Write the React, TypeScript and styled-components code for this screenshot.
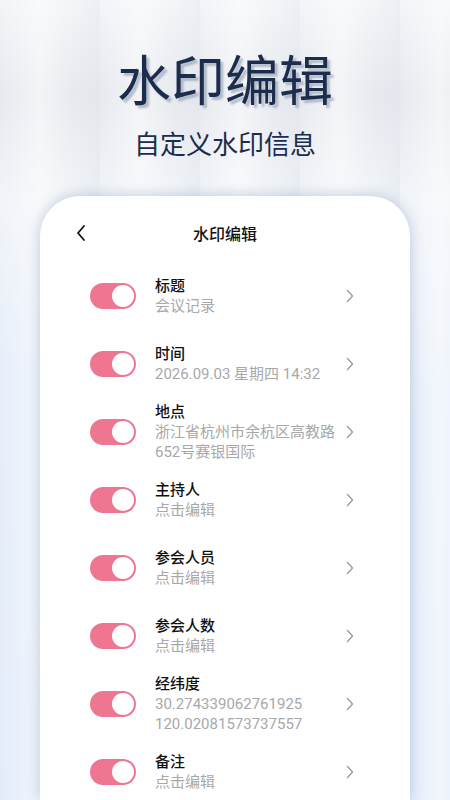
import React from 'react';
import styled, { createGlobalStyle } from 'styled-components';

const GlobalStyle = createGlobalStyle`
  html, body {
    margin: 0;
    padding: 0;
  }
  body {
    font-family: Roboto, "Noto Sans CJK SC", sans-serif;
  }
`;

const Page = styled.div`
  position: relative;
  width: 450px;
  height: 800px;
  overflow: hidden;
  display: flex;
  flex-direction: column;
  background:
    repeating-linear-gradient(
      90deg,
      rgba(255, 255, 255, 0) 0px,
      rgba(255, 255, 255, 0.5) 40px,
      rgba(255, 255, 255, 0) 75px,
      rgba(220, 226, 234, 0.3) 100px
    ),
    linear-gradient(180deg, #f3f5f8 0px, #e6e9ee 95px, #f1f4f8 200px, #e6eefa 380px, #e3ecfa 800px);
`;

const Hero = styled.div`
  flex: none;
  display: flex;
  flex-direction: column;
  align-items: center;
  padding-top: 46px;
  height: 150px;
`;

const HeroTitle = styled.h1`
  margin: 0;
  font-family: "Noto Sans CJK SC", sans-serif;
  font-size: 54px;
  line-height: 64px;
  font-weight: 400;
  color: #1c2c4c;
  text-shadow: 3px 3px 2px rgba(130, 145, 170, 0.55);
`;

const HeroSub = styled.p`
  margin: 18px 0 0;
  font-family: "Noto Sans CJK SC", sans-serif;
  font-size: 26px;
  line-height: 30px;
  font-weight: 400;
  color: #1c2c4c;
`;

const Card = styled.div`
  flex: 1;
  min-height: 0;
  margin: 0 40px;
  background: #fff;
  border-radius: 40px 40px 0 0;
  box-shadow: 0 0 14px rgba(120, 145, 180, 0.45);
  display: flex;
  flex-direction: column;
  overflow: hidden;
`;

const CardHeader = styled.div`
  position: relative;
  flex: none;
  height: 66px;
  display: flex;
  justify-content: center;
  padding-top: 25px;
  box-sizing: border-box;
`;

const BackButton = styled.div`
  position: absolute;
  left: 35px;
  top: 28px;
  width: 12px;
  height: 18px;
  display: flex;
`;

const CardTitle = styled.div`
  font-family: "Noto Sans CJK SC", sans-serif;
  font-size: 16px;
  line-height: 24px;
  font-weight: 500;
  color: #111;
`;

const List = styled.div`
  display: flex;
  flex-direction: column;
`;

const Row = styled.div`
  flex: none;
  height: 68px;
  display: flex;
  align-items: center;
  padding: 0 55px 0 50px;
`;

const Toggle = styled.div<{ $on: boolean }>`
  flex: none;
  width: 46px;
  height: 26px;
  border-radius: 13px;
  background: ${p => (p.$on ? '#ee7690' : '#d8d8d8')};
  display: flex;
  align-items: center;
  justify-content: ${p => (p.$on ? 'flex-end' : 'flex-start')};
  padding: 0 2px;
  box-sizing: border-box;
`;

const Knob = styled.div`
  width: 22px;
  height: 22px;
  border-radius: 50%;
  background: #fff;
`;

const Texts = styled.div`
  flex: 1;
  min-width: 0;
  margin-left: 19px;
  margin-right: 6px;
  display: flex;
  flex-direction: column;
`;

const Label = styled.div`
  font-size: 15px;
  line-height: 20px;
  font-weight: 500;
  color: #111;
`;

const Value = styled.div`
  font-size: 15px;
  line-height: 20px;
  color: #a8a8a8;
  word-break: break-all;
`;

const Chevron = styled.div`
  flex: none;
  width: 10px;
  display: flex;
  justify-content: center;
`;

type Item = { label: string; value: string[] };

const items: Item[] = [
  { label: '标题', value: ['会议记录'] },
  { label: '时间', value: ['2026.09.03 星期四 14:32'] },
  { label: '地点', value: ['浙江省杭州市余杭区高教路', '652号赛银国际'] },
  { label: '主持人', value: ['点击编辑'] },
  { label: '参会人员', value: ['点击编辑'] },
  { label: '参会人数', value: ['点击编辑'] },
  { label: '经纬度', value: ['30.274339062761925', '120.02081573737557'] },
  { label: '备注', value: ['点击编辑'] },
];

const App: React.FC = () => {
  return (
    <>
      <GlobalStyle />
      <Page>
        <Hero>
          <HeroTitle>水印编辑</HeroTitle>
          <HeroSub>自定义水印信息</HeroSub>
        </Hero>
        <Card>
          <CardHeader>
            <BackButton>
              <svg width="12" height="18" viewBox="0 0 12 18">
                <polyline points="9,2 3,9 9,16" fill="none" stroke="#111" strokeWidth="1.8" strokeLinecap="round" strokeLinejoin="round" />
              </svg>
            </BackButton>
            <CardTitle>水印编辑</CardTitle>
          </CardHeader>
          <List>
            {items.map(item => (
              <Row key={item.label}>
                <Toggle $on>
                  <Knob />
                </Toggle>
                <Texts>
                  <Label>{item.label}</Label>
                  {item.value.map(line => (
                    <Value key={line}>{line}</Value>
                  ))}
                </Texts>
                <Chevron>
                  <svg width="8" height="14" viewBox="0 0 8 14">
                    <polyline points="1.5,1.5 6.5,7 1.5,12.5" fill="none" stroke="#9a9a9a" strokeWidth="1.3" strokeLinecap="round" strokeLinejoin="round" />
                  </svg>
                </Chevron>
              </Row>
            ))}
          </List>
        </Card>
      </Page>
    </>
  );
};

export default App;
